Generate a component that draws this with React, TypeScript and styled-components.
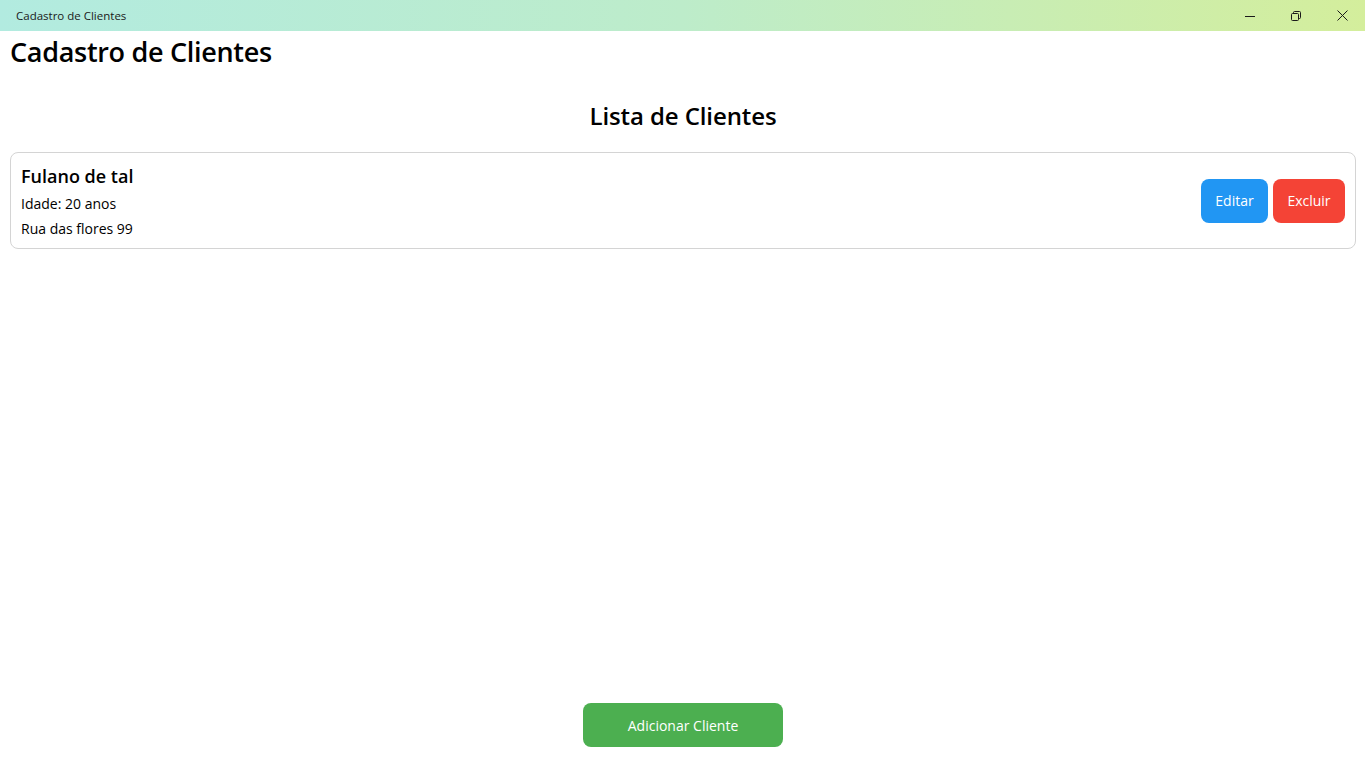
import React from "react";
import styled, { createGlobalStyle } from "styled-components";

const Global = createGlobalStyle`
  html, body { margin: 0; padding: 0; background: #ffffff; }
  body { font-family: "Open Sans", "Noto Sans", sans-serif; color: #000; }
  * { box-sizing: border-box; }
`;

const Window = styled.div`
  width: 1365px;
  height: 767px;
  display: flex;
  flex-direction: column;
  overflow: hidden;
`;

const TitleBar = styled.div`
  height: 31px;
  flex: 0 0 31px;
  display: flex;
  align-items: center;
  background: linear-gradient(90deg, #b2ebe0 0%, #bdecca 50%, #d4ee9c 100%);
`;

const TitleText = styled.div`
  flex: 1;
  padding-left: 16px;
  font-family: "Open Sans", sans-serif;
  font-size: 11.5px;
  color: #1a1a1a;
`;

const WinButton = styled.div`
  width: 46px;
  height: 31px;
  display: flex;
  align-items: center;
  justify-content: center;
  color: #1a1a1a;
`;

const Content = styled.main`
  flex: 1;
  display: flex;
  flex-direction: column;
  padding: 0 9px 20px 10px;
`;

const AppTitle = styled.h1`
  margin: 2px 0 0;
  font-family: "Open Sans", sans-serif;
  font-weight: 600;
  font-size: 27px;
  line-height: 38px;
  letter-spacing: -0.3px;
`;

const ListTitle = styled.h2`
  margin: 28px 0 0;
  text-align: center;
  font-family: "Open Sans", sans-serif;
  font-weight: 600;
  font-size: 24px;
  line-height: 34px;
  letter-spacing: -0.1px;
`;

const List = styled.div`
  margin-top: 19px;
  display: flex;
  flex-direction: column;
  gap: 10px;
  flex: 1;
`;

const Card = styled.div`
  display: flex;
  align-items: center;
  justify-content: space-between;
  border: 1px solid #d4d4d4;
  border-radius: 8px;
  padding: 8px 10px 8px 10px;
  height: 97px;
`;

const Info = styled.div`
  display: flex;
  flex-direction: column;
  padding-top: 1px;
`;

const Name = styled.div`
  font-weight: 600;
  font-size: 18px;
  line-height: 29px;
`;

const Line = styled.div`
  font-size: 14px;
  line-height: 25px;
`;

const Actions = styled.div`
  display: flex;
  gap: 5px;
`;

const Button = styled.button<{ $bg: string; $w: number }>`
  height: 44px;
  width: ${(p) => p.$w}px;
  border: none;
  border-radius: 8px;
  background: ${(p) => p.$bg};
  color: #fff;
  font-family: "Open Sans", sans-serif;
  font-size: 14px;
  padding: 0;
  cursor: pointer;
`;

const Footer = styled.div`
  display: flex;
  justify-content: center;
`;

export default function App() {
  return (
    <>
      <Global />
      <Window>
        <TitleBar>
          <TitleText>Cadastro de Clientes</TitleText>
          <WinButton>
            <svg width="10" height="10" viewBox="0 0 10 10">
              <path d="M0 5.5h10" stroke="#1a1a1a" strokeWidth="1" />
            </svg>
          </WinButton>
          <WinButton>
            <svg width="10" height="10" viewBox="0 0 10 10" fill="none" stroke="#1a1a1a" strokeWidth="1">
              <rect x="0.5" y="2.5" width="7" height="7" rx="1" />
              <path d="M2.5 2.5V1.5a1 1 0 0 1 1-1h5a1 1 0 0 1 1 1v5a1 1 0 0 1-1 1h-1" />
            </svg>
          </WinButton>
          <WinButton>
            <svg width="11" height="11" viewBox="0 0 11 11" stroke="#1a1a1a" strokeWidth="1">
              <path d="M0.5 0.5l10 10M10.5 0.5l-10 10" />
            </svg>
          </WinButton>
        </TitleBar>
        <Content>
          <AppTitle>Cadastro de Clientes</AppTitle>
          <ListTitle>Lista de Clientes</ListTitle>
          <List>
            <Card>
              <Info>
                <Name>Fulano de tal</Name>
                <Line>Idade: 20 anos</Line>
                <Line>Rua das flores 99</Line>
              </Info>
              <Actions>
                <Button $bg="#2196f3" $w={67}>Editar</Button>
                <Button $bg="#f44336" $w={72}>Excluir</Button>
              </Actions>
            </Card>
          </List>
          <Footer>
            <Button $bg="#4caf50" $w={200}>Adicionar Cliente</Button>
          </Footer>
        </Content>
      </Window>
    </>
  );
}
